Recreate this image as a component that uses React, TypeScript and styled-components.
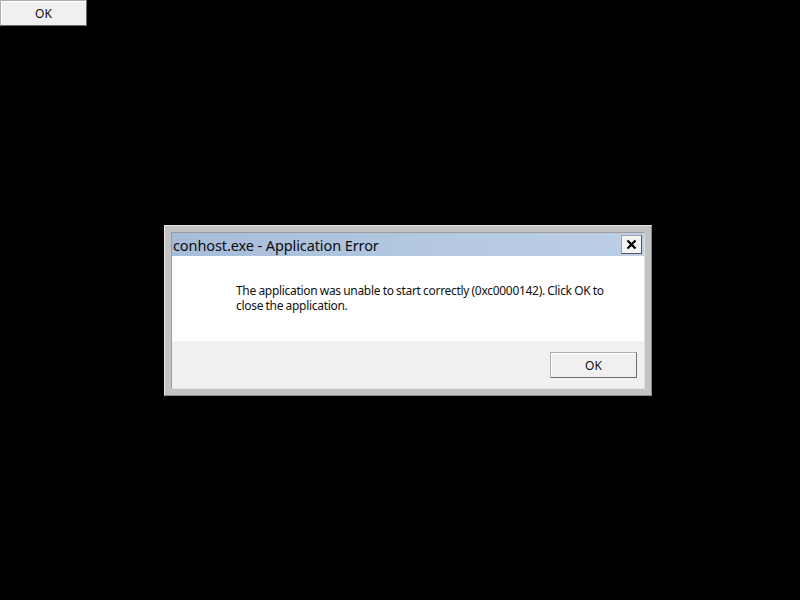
import React from "react";
import styled, { createGlobalStyle } from "styled-components";

const Global = createGlobalStyle`
  html, body { margin: 0; padding: 0; background: #000; }
  body { width: 800px; height: 600px; overflow: hidden; font-family: "Noto Sans", "Open Sans", sans-serif; }
`;

const Page = styled.div`
  width: 800px;
  height: 600px;
  display: flex;
  flex-direction: column;
  align-items: flex-start;
  background: #000;
`;

const Button = styled.button<{ $w?: number }>`
  box-sizing: border-box;
  width: ${(p) => p.$w ?? 87}px;
  height: 26px;
  background: #f0f0f0;
  border: 1px solid #adadad;
  border-right-color: #6e6e6e;
  border-bottom-color: #6e6e6e;
  box-shadow: inset 1px 1px 0 #fff;
  font-family: "Noto Sans", "Open Sans", sans-serif;
  font-size: 12px;
  color: #111;
  padding: 0;
  display: flex;
  align-items: center;
  justify-content: center;
`;

const Dialog = styled.div`
  box-sizing: border-box;
  margin-top: 199px;
  margin-left: 164px;
  width: 488px;
  height: 171px;
  background: #c3c3c3;
  border: 1px solid #e8e8e8;
  border-right-color: #8a8a8a;
  border-bottom-color: #8a8a8a;
  padding: 6px;
  display: flex;
  flex-direction: column;
`;

const Inner = styled.div`
  flex: 1;
  display: flex;
  flex-direction: column;
  border: 1px solid #9c9c9c;
  border-right-color: #e0e0e0;
  border-bottom-color: #e0e0e0;
`;

const TitleBar = styled.div`
  height: 23px;
  background: linear-gradient(90deg, #a6bcd8 0%, #b5c9e2 60%, #bccfe6 100%);
  display: flex;
  align-items: center;
  justify-content: space-between;
  padding-left: 1px;
  padding-right: 2px;
`;

const Title = styled.span`
  font-size: 14.5px;
  color: #0d0d0d;
  letter-spacing: -0.1px;
`;

const CloseBtn = styled.div`
  box-sizing: border-box;
  width: 21px;
  height: 19px;
  background: #f4f4f4;
  border: 1px solid #a0a0a0;
  border-right-color: #555;
  border-bottom-color: #555;
  display: flex;
  align-items: center;
  justify-content: center;
`;

const Content = styled.div`
  height: 85px;
  background: #fff;
  padding: 27px 0 0 64px;
  box-sizing: border-box;
  display: flex;
  flex-direction: column;
  font-size: 12px;
  letter-spacing: -0.3px;
  word-spacing: -0.4px;
  color: #111;
`;

const Line = styled.div`
  height: 15px;
  line-height: 15px;
  white-space: nowrap;
`;

const Footer = styled.div`
  flex: 1;
  background: #f0f0f0;
  display: flex;
  justify-content: flex-end;
  align-items: flex-start;
  padding: 11px 7px 0 0;
`;

export default function App() {
  return (
    <>
      <Global />
      <Page>
        <Button>OK</Button>
        <Dialog>
          <Inner>
            <TitleBar>
              <Title>conhost.exe - Application Error</Title>
              <CloseBtn>
                <svg width="11" height="11" viewBox="0 0 11 11">
                  <path d="M1.5 1.5 L9.5 9.5 M9.5 1.5 L1.5 9.5" stroke="#000" strokeWidth="2.2" />
                </svg>
              </CloseBtn>
            </TitleBar>
            <Content>
              <Line>The application was unable to start correctly (0xc0000142). Click OK to</Line>
              <Line>close the application.</Line>
            </Content>
            <Footer>
              <Button>OK</Button>
            </Footer>
          </Inner>
        </Dialog>
      </Page>
    </>
  );
}
